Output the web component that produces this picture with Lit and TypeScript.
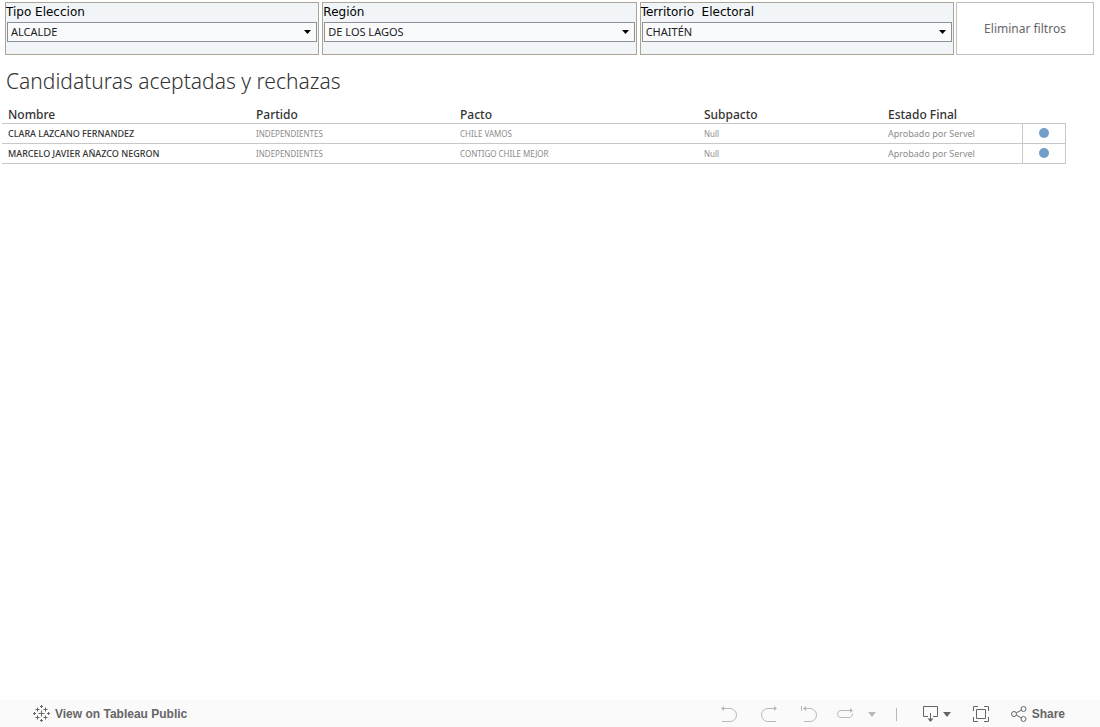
import { LitElement, html, css, svg } from "lit";
import { customElement, property } from "lit/decorators.js";

interface Candidate {
  name: string;
  party: string;
  pact: string;
  subpact: string;
  status: string;
}

const CANDIDATES: Candidate[] = [
  {
    name: "CLARA LAZCANO FERNANDEZ",
    party: "INDEPENDIENTES",
    pact: "CHILE VAMOS",
    subpact: "Null",
    status: "Aprobado por Servel",
  },
  {
    name: "MARCELO JAVIER AÑAZCO NEGRON",
    party: "INDEPENDIENTES",
    pact: "CONTIGO CHILE MEJOR",
    subpact: "Null",
    status: "Aprobado por Servel",
  },
];

@customElement("filter-card")
export class FilterCard extends LitElement {
  @property() label = "";
  @property() value = "";

  static styles = css`
    :host {
      display: block;
      flex: 1 1 0;
      min-width: 0;
      box-sizing: border-box;
      height: 53px;
      border: 1px solid #aaa594;
      background: #f1f5f7;
    }
    .label {
      display: block;
      font: 12px/18px "DejaVu Sans", sans-serif;
      color: #000;
      white-space: pre;
    }
    .box {
      display: grid;
      align-items: center;
      margin: 1px;
    }
    .select,
    .arrow {
      grid-area: 1 / 1;
    }
    .select {
      appearance: none;
      box-sizing: border-box;
      width: 100%;
      height: 20px;
      margin: 0;
      padding: 0 20px 0 3px;
      border: 1px solid #8e9298;
      border-radius: 0;
      background: #f9fafc;
      color: #222;
      font: 11px/18px "Noto Sans", sans-serif;
    }
    .arrow {
      justify-self: end;
      margin-right: 6px;
      pointer-events: none;
    }
  `;

  render() {
    return html`
      <label class="label" for="choice">${this.label}</label>
      <div class="box">
        <select class="select" id="choice">
          <option>${this.value}</option>
        </select>
        <svg class="arrow" width="7" height="4" viewBox="0 0 7 4" aria-hidden="true">
          <path d="M0 0h7L3.5 4z" fill="#000" />
        </svg>
      </div>
    `;
  }
}

const caret = svg`<path d="M0 0h8L4 5z" fill="currentColor" />`;

const plus = (x: number, y: number, r: number) =>
  svg`<path d="M${x - r} ${y}H${x + r}M${x} ${y - r}V${y + r}" />`;

@customElement("viz-toolbar")
export class VizToolbar extends LitElement {
  static styles = css`
    :host {
      display: flex;
      align-items: center;
      box-sizing: border-box;
      height: 27px;
      padding: 1px 35px 0 33px;
      background: #fafafa;
      color: #666;
      font: bold 12px/26px "Liberation Sans", sans-serif;
    }
    .link,
    .button {
      display: flex;
      align-items: center;
      gap: 5px;
      margin: 0;
      padding: 0;
      border: 0;
      background: none;
      color: inherit;
      font: inherit;
      text-decoration: none;
      white-space: nowrap;
    }
    .tools {
      display: flex;
      align-items: center;
      margin-left: auto;
    }
    .history {
      display: flex;
      align-items: center;
      gap: 24px;
      color: #b8b8b8;
    }
    .repeat {
      margin: 0 -9px 0 -4px;
    }
    .divider {
      width: 1px;
      height: 13px;
      margin: 0 26px 0 20px;
      background: #b8b8b8;
    }
    .actions {
      display: flex;
      align-items: center;
      gap: 22px;
    }
    svg {
      display: block;
      fill: none;
      stroke: currentColor;
    }
    .solid {
      stroke: none;
    }
  `;

  render() {
    return html`
      <a class="link" href="#">
        <svg width="17" height="18" viewBox="0 0 17 18" aria-hidden="true">
          ${plus(8.5, 8.5, 3)} ${plus(8.5, 1.5, 1.5)} ${plus(8.5, 15.5, 1.5)}
          ${plus(1.5, 8.5, 1.5)} ${plus(15.5, 8.5, 1.5)} ${plus(4.5, 4.5, 2)}
          ${plus(12.5, 4.5, 2)} ${plus(4.5, 12.5, 2)} ${plus(12.5, 12.5, 2)}
        </svg>
        <span>View on Tableau Public</span>
      </a>
      <div class="tools">
        <div class="history">
          <button class="button" aria-label="Undo">
            <svg width="16" height="16" viewBox="0 0 16 16">
              <path d="M2 2.5h7a6.5 6.5 0 0 1 0 13H1" />
              <path class="solid" d="M0 2.5 3 0v5z" fill="currentColor" />
            </svg>
          </button>
          <button class="button" aria-label="Redo">
            <svg width="16" height="16" viewBox="0 0 16 16">
              <path d="M14 2.5H7a6.5 6.5 0 0 0 0 13h8" />
              <path class="solid" d="M16 2.5 13 0v5z" fill="currentColor" />
            </svg>
          </button>
          <button class="button" aria-label="Revert">
            <svg width="16" height="16" viewBox="0 0 16 16">
              <path d="M.5 0v5M4 2.5h5a6.5 6.5 0 0 1 0 13H3" />
              <path class="solid" d="M2 2.5 5 0v5z" fill="currentColor" />
            </svg>
          </button>
          <button class="button repeat" aria-label="Refresh">
            <svg width="16" height="12" viewBox="0 0 16 12">
              <path d="M14 2.5H4a3.5 3.5 0 0 0 0 7h8a3.5 3.5 0 0 0 3.5-4" />
              <path class="solid" d="M16 2.5 13 0v5z" fill="currentColor" />
            </svg>
          </button>
          <button class="button" aria-label="Refresh options">
            <svg class="solid" width="8" height="5" viewBox="0 0 8 5">${caret}</svg>
          </button>
        </div>
        <div class="divider"></div>
        <div class="actions">
          <button class="button" aria-label="Download">
            <svg width="15" height="16" viewBox="0 0 15 16">
              <path d="M5 10.5H.5V.5h14v10H10M7.5 7v8" />
              <path class="solid" d="M4.5 12.5h6l-3 3.5z" fill="currentColor" />
            </svg>
            <svg class="solid" width="8" height="5" viewBox="0 0 8 5">${caret}</svg>
          </button>
          <button class="button" aria-label="Full screen">
            <svg width="16" height="16" viewBox="0 0 16 16">
              <path d="M.5 5V.5H5M11 .5h4.5V5M15.5 11v4.5H11M5 15.5H.5V11M3.5 3.5h9v9h-9z" />
            </svg>
          </button>
          <button class="button">
            <svg width="16" height="16" viewBox="0 0 16 16" aria-hidden="true">
              <circle cx="3" cy="8" r="2.5" />
              <circle cx="12.5" cy="3" r="2.5" />
              <circle cx="12.5" cy="13" r="2.5" />
              <path d="M5.3 6.8 10.3 4.2M5.3 9.2l5 2.6" />
            </svg>
            <span>Share</span>
          </button>
        </div>
      </div>
    `;
  }
}

@customElement("app-root")
export class AppRoot extends LitElement {
  static styles = css`
    :host {
      display: flex;
      flex-direction: column;
      min-height: 100vh;
      background: #fff;
      font-family: "Noto Sans", sans-serif;
    }
    .top {
      display: flex;
      gap: 2px;
      padding: 2px 6px 0 5px;
    }
    .filters {
      display: flex;
      flex: 1;
      gap: 3px;
    }
    .clear {
      flex: 0 0 138px;
      padding: 0;
      border: 1px solid #c0c0c0;
      background: #fff;
      color: #666;
      font: 12px/18px "Noto Sans", sans-serif;
    }
    main {
      flex: 1;
    }
    .title {
      margin: 12px 6px;
      color: #333;
      font-size: 21px;
      font-weight: 300;
      line-height: 28px;
    }
    .table {
      width: calc(100% - 37px);
      margin-left: 2px;
      border-collapse: collapse;
      table-layout: fixed;
    }
    .col-name { width: 248px; }
    .col-party { width: 204px; }
    .col-pact { width: 244px; }
    .col-subpact { width: 184px; }
    .col-status { width: 140px; }
    .col-mark { width: 43px; }
    th,
    td {
      padding: 0 6px;
      border-bottom: 1px solid #c8c8c8;
      text-align: left;
      white-space: nowrap;
    }
    thead th {
      height: 16px;
      color: #333;
      font-size: 12px;
      font-weight: 500;
      line-height: 16px;
    }
    tbody th,
    tbody td {
      height: 19px;
      font-size: 9px;
      line-height: 19px;
    }
    tbody th {
      color: #333;
      font-weight: 500;
    }
    tbody td {
      color: #8c8c8c;
      font-size: 8px;
      font-weight: 400;
    }
    tbody .status {
      font-size: 9px;
    }
    tbody .mark {
      border-left: 1px solid #c8c8c8;
      border-right: 1px solid #c8c8c8;
    }
    .dot {
      display: block;
      width: 10px;
      height: 10px;
      margin: 0 auto 1px;
      border-radius: 50%;
      background: #729fc7;
    }
  `;

  render() {
    return html`
      <div class="top">
        <div class="filters">
          <filter-card label="Tipo Eleccion" value="ALCALDE"></filter-card>
          <filter-card label="Región" value="DE LOS LAGOS"></filter-card>
          <filter-card label="Territorio  Electoral" value="CHAITÉN"></filter-card>
        </div>
        <button class="clear">Eliminar filtros</button>
      </div>
      <main>
        <h1 class="title">Candidaturas aceptadas y rechazas</h1>
        <table class="table">
          <colgroup>
            <col class="col-name" />
            <col class="col-party" />
            <col class="col-pact" />
            <col class="col-subpact" />
            <col class="col-status" />
            <col class="col-mark" />
          </colgroup>
          <thead>
            <tr>
              <th scope="col">Nombre</th>
              <th scope="col">Partido</th>
              <th scope="col">Pacto</th>
              <th scope="col">Subpacto</th>
              <th scope="col" colspan="2">Estado Final</th>
            </tr>
          </thead>
          <tbody>
            ${CANDIDATES.map(
              (c) => html`
                <tr>
                  <th scope="row">${c.name}</th>
                  <td>${c.party}</td>
                  <td>${c.pact}</td>
                  <td>${c.subpact}</td>
                  <td class="status">${c.status}</td>
                  <td class="mark"><span class="dot"></span></td>
                </tr>
              `
            )}
          </tbody>
        </table>
      </main>
      <viz-toolbar></viz-toolbar>
    `;
  }
}
